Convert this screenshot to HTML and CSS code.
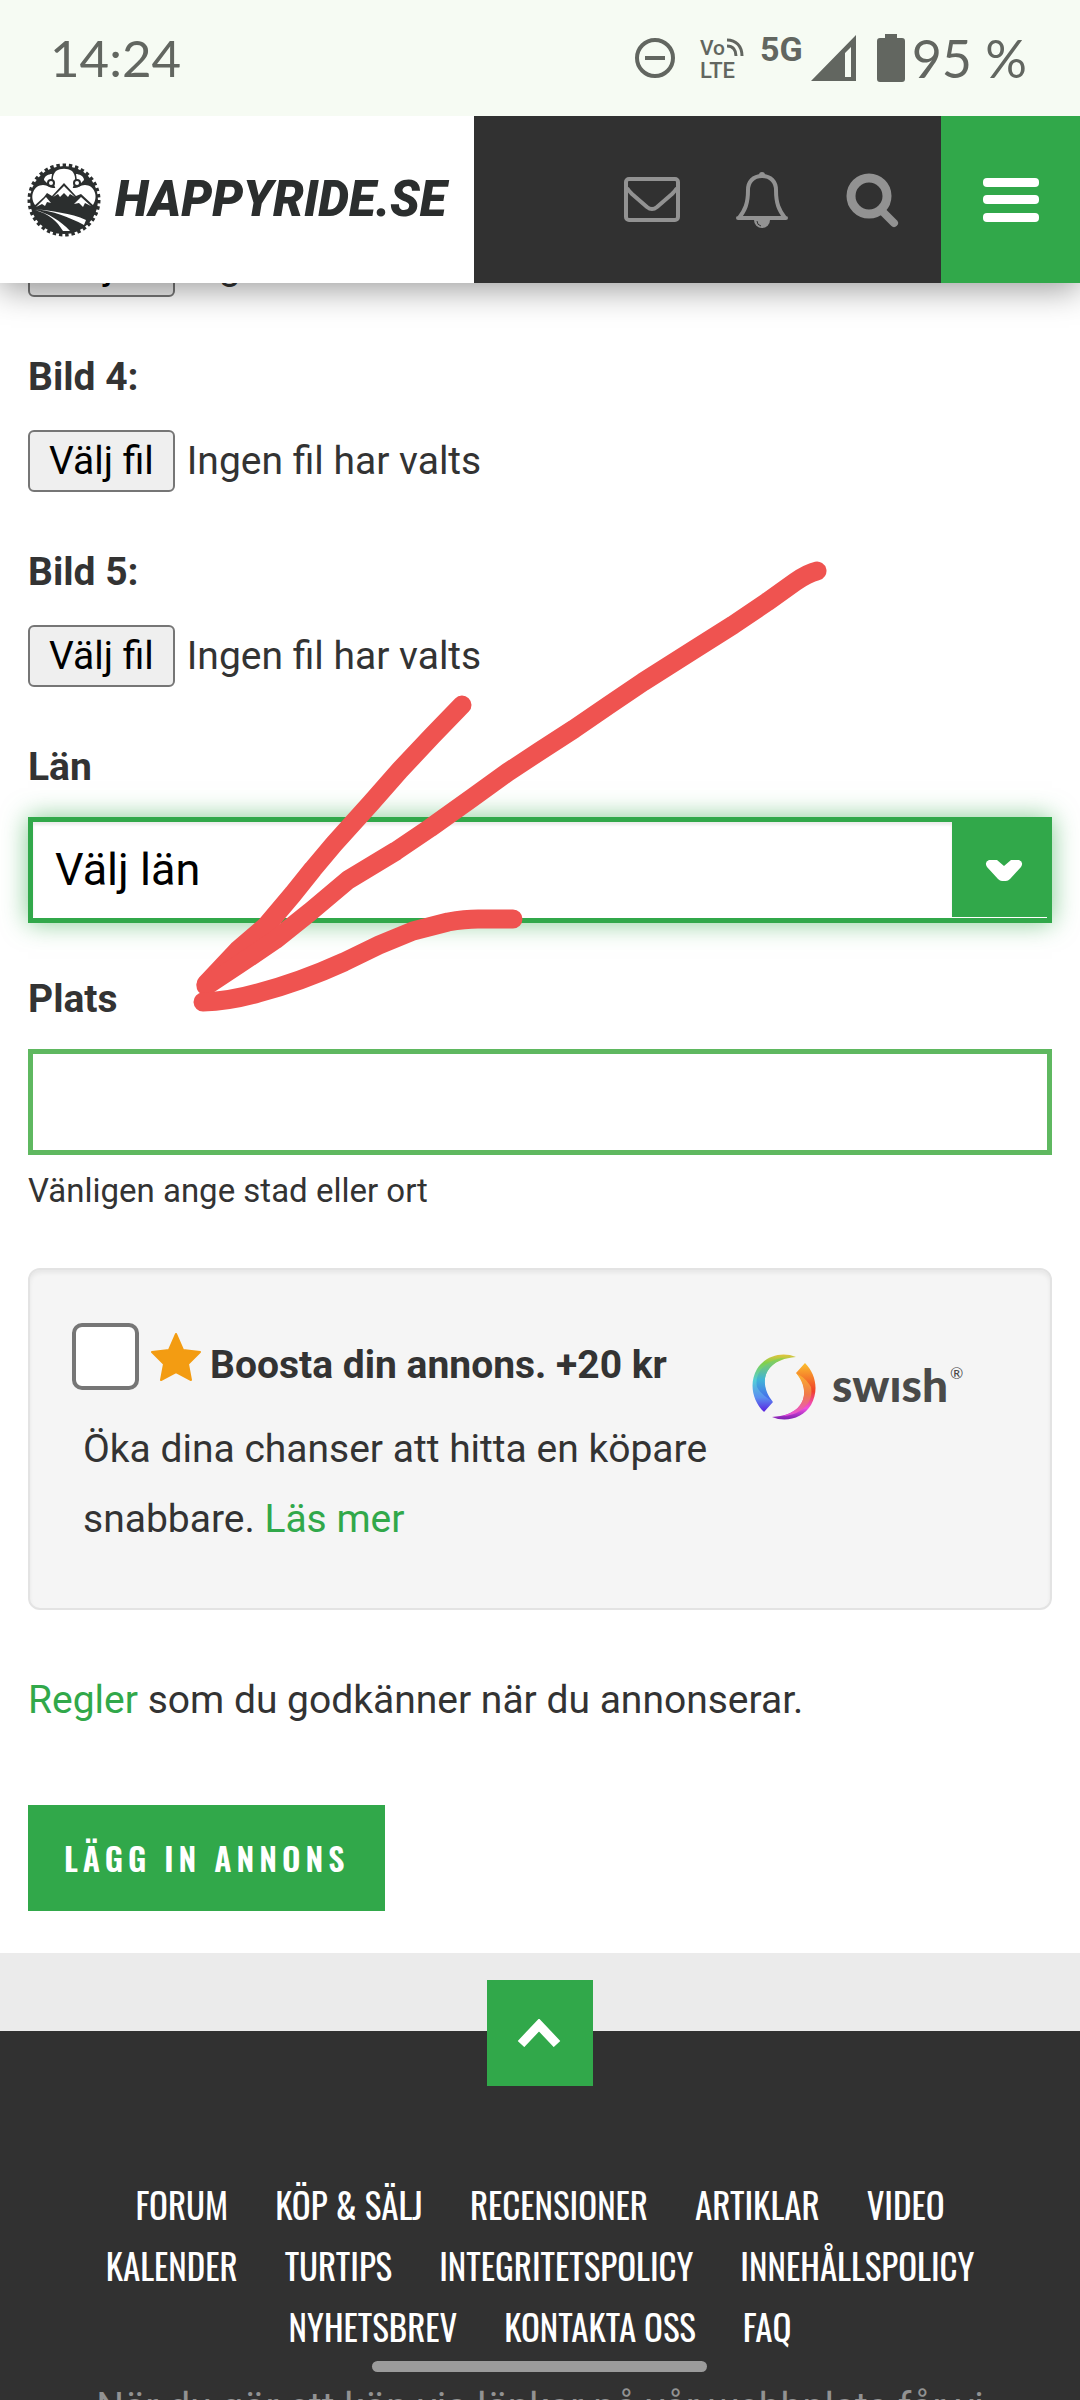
FILE: index.html
```html
<!DOCTYPE html>
<html lang="sv">
<head>
    <meta charset="UTF-8">
    <title>Happyride.se - Lägg in annons</title>
    <meta name="viewport" content="width=device-width, initial-scale=1.0">
    <link rel="stylesheet" href="styles.css">
</head>
<body>
    <div class="screen">
        <div class="statusbar">
            <span class="clock">14:24</span>
            <div class="statusIcons">
                <svg class="dnd" width="42" height="42" viewBox="0 0 42 42"><circle cx="21" cy="21" r="18" fill="none" stroke="#626660" stroke-width="4"/><path d="M11 21h20" stroke="#626660" stroke-width="4"/></svg>
                <svg class="volte" width="46" height="54" viewBox="0 -4 46 54" fill="#626660">
                    <text x="1" y="20" font-size="21">Vo</text>
                    <text x="1" y="43" font-size="22">LTE</text>
                    <path d="M28 11c6 0 9 4 9 10M28 5c9 0 15 6 15 16" fill="none" stroke="#626660" stroke-width="3"/>
                </svg>
                <span class="network">5G</span>
                <svg class="signal" width="46" height="46" viewBox="0 0 46 46"><path d="M45 0v46H0zM34 18v24h6V12z" fill="#626660" fill-rule="evenodd"/></svg>
                <svg class="battery" width="28" height="48" viewBox="0 0 28 48"><path d="M8 0h12v4h5a3 3 0 0 1 3 3v38a3 3 0 0 1-3 3H3a3 3 0 0 1-3-3V7a3 3 0 0 1 3-3h5z" fill="#626660"/></svg>
                <span class="percent">95 %</span>
            </div>
        </div>

        <header class="header">
            <a class="logo" href="#">
                <svg width="74" height="74" viewBox="0 0 74 74">
                    <circle cx="37" cy="37" r="34" fill="#2b2e2e"/>
                    <circle cx="37" cy="37" r="34.5" fill="none" stroke="#2b2e2e" stroke-width="4" stroke-dasharray="3.4 2.79"/>
                    <g fill="#fff">
                        <path d="M28 24c-3-5-3-12 1-16 5-3 11-3 16 0 4 4 4 11 1 16l-1 4H29z"/>
                        <path d="M17 17c0-4 5-6 8-6l-1 7-4 2zM57 17c0-4-5-6-8-6l1 7 4 2z"/>
                        <path d="M8 42C2 33 7 22 16 22c5 0 6 3 10 3h22c4 0 5-3 10-3 9 0 14 11 8 20L37 46z"/>
                    </g>
                    <g fill="#2b2e2e">
                        <circle cx="24" cy="20" r="4"/><circle cx="50" cy="20" r="4"/>
                        <path d="M6 44l11-10 3-4 5 3 12-13 12 13 5-2 13 12-5 7H12z"/>
                    </g>
                    <g fill="#fff">
                        <circle cx="24" cy="20" r="2"/><circle cx="50" cy="20" r="2"/>
                        <path d="M26 34l11-11 11 11-5-3-2 3-4-4-4 4-2-3zM9 44l10-10 5 6-4-1-2 4-3-2zM47 41l7-7 10 9-6-3-2 4-4-4z"/>
                        <path d="M8 46c16 2 36 4 51 11l-2 5C42 54 26 48 8 46zM8 47c13 3 26 11 35 21h-7C30 58 22 51 8 47z"/>
                    </g>
                </svg>
                <span>HAPPYRIDE.SE</span>
            </a>
            <nav class="headerNav">
                <a href="#" aria-label="Meddelanden"><svg width="58" height="58" viewBox="0 0 58 58" fill="none" stroke="#929292" stroke-width="4" stroke-linejoin="round"><rect x="3" y="8" width="52" height="41" rx="3"/><path d="M4 17q2 3 5 6l15 13q5 4 10 0l15-13q3-3 5-6"/></svg></a>
                <a href="#" aria-label="Aviseringar"><svg width="58" height="58" viewBox="0 0 58 58"><path d="M5 47h48M29 5c-9 0-14 6-14 14 0 14-3 20-9 28M29 5c9 0 14 6 14 14 0 14 3 20 9 28" fill="none" stroke="#929292" stroke-width="4" stroke-linecap="round"/><path d="M21 49h16a8 8 0 0 1-16 0z" fill="#929292"/><circle cx="29" cy="4" r="3" fill="#929292"/><path d="M24 50q0 4 4 5" fill="none" stroke="#313131"/></svg></a>
                <a href="#" aria-label="Sök"><svg width="58" height="58" viewBox="0 0 58 58" fill="none" stroke="#929292"><circle cx="26" cy="25" r="18" stroke-width="9"/><path d="M40 41l11 11" stroke-width="8" stroke-linecap="round"/></svg></a>
            </nav>
            <button class="menuButton" type="button" aria-label="Meny"><svg width="56" height="44" viewBox="0 0 56 44" fill="#fff"><rect width="56" height="9" rx="4"/><rect y="17" width="56" height="9" rx="4"/><rect y="35" width="56" height="9" rx="4"/></svg></button>
        </header>

        <form class="adForm">
            <div class="fileField">
                <div class="fileRow">
                    <input id="bild3" type="file" tabindex="-1" aria-label="Bild 3">
                    <button type="button">Välj fil</button>
                    <span>Ingen fil har valts</span>
                </div>
            </div>
            <div class="fileField">
                <label for="bild4">Bild 4:</label>
                <div class="fileRow">
                    <input id="bild4" type="file" tabindex="-1">
                    <button type="button">Välj fil</button>
                    <span>Ingen fil har valts</span>
                </div>
            </div>
            <div class="fileField">
                <label for="bild5">Bild 5:</label>
                <div class="fileRow">
                    <input id="bild5" type="file" tabindex="-1">
                    <button type="button">Välj fil</button>
                    <span>Ingen fil har valts</span>
                </div>
            </div>
            <div class="field">
                <label for="lan">Län</label>
                <div class="selectBox">
                    <select id="lan">
                        <option>Välj län</option>
                    </select>
                    <span class="selectArrow"><svg width="38" height="22" viewBox="0 0 38 22"><path d="M4 1h8l7 6 7-6h8q5 2 2 7L25 20q-2 2-4 2h-4q-2 0-4-2L2 8q-3-5 2-7z" fill="#fff"/></svg></span>
                </div>
            </div>
            <div class="field">
                <label for="plats">Plats</label>
                <input id="plats" class="textInput" type="text">
                <p class="hint">Vänligen ange stad eller ort</p>
            </div>

            <div class="boost">
                <div class="boostText">
                    <div class="boostTitle">
                        <input id="boost" type="checkbox">
                        <svg width="50" height="48" viewBox="0 0 50 48"><path d="M25 1l7 16 17 2-12 12 3 16-15-8-15 8 3-16L1 19l17-2z" fill="#f39c12" stroke="#f39c12" stroke-width="2" stroke-linejoin="round"/></svg>
                        <label for="boost">Boosta din annons. +20 kr</label>
                    </div>
                    <p>Öka dina chanser att hitta en köpare snabbare. <a href="#">Läs mer</a></p>
                </div>
                <svg class="swish" width="214" height="66" viewBox="0 0 214 66" role="img" aria-label="Swish">
                    <defs>
                        <linearGradient id="cool" x1="0" y1="0" x2="0" y2="1"><stop offset="0" stop-color="#e5c43c"/><stop offset=".15" stop-color="#7fd04c"/><stop offset=".45" stop-color="#54cdd8"/><stop offset=".75" stop-color="#5b8ff0"/><stop offset="1" stop-color="#5a1fe0"/></linearGradient>
                        <linearGradient id="cool2" x1="0" y1="0" x2="0" y2="1"><stop offset="0" stop-color="#8cd24a"/><stop offset=".5" stop-color="#3fb3d8"/><stop offset="1" stop-color="#4a5ef0"/></linearGradient>
                        <linearGradient id="warm" x1="0" y1="0" x2="0" y2="1"><stop offset="0" stop-color="#fbc02d"/><stop offset=".5" stop-color="#f0402a"/><stop offset=".8" stop-color="#f04fe0"/><stop offset="1" stop-color="#7a1fb0"/></linearGradient>
                        <linearGradient id="warm2" x1="0" y1="0" x2="0" y2="1"><stop offset="0" stop-color="#fbb42d"/><stop offset=".5" stop-color="#f07a4a"/><stop offset="1" stop-color="#e84fe0"/></linearGradient>
                    </defs>
                    <path d="M44 3C30-3 13 2 5 15-3 29 0 46 12 58l9-10C9 38 5 6 44 3z" fill="url(#cool)"/>
                    <path d="M33 4C14 5 2 19 5 33c4 7 9 10 16 15C9 34 8 12 33 4z" fill="url(#cool2)"/>
                    <path d="M20 63c14 6 31 1 39-12 8-14 5-31-6-42l-9 10c12 10 16 42-24 44z" fill="url(#warm)"/>
                    <path d="M31 62c19-1 31-14 28-29-4-7-8-10-15-14 12 14 13 35-13 43z" fill="url(#warm2)"/>
                    <text class="swishWord" x="80" y="48">swısh</text>
                    <text class="swishReg" x="198" y="25">®</text>
                </svg>
            </div>

            <p class="rules"><a href="#">Regler</a> som du godkänner när du annonserar.</p>
            <button class="submit" type="submit">LÄGG IN ANNONS</button>
        </form>

        <div class="band">
            <a class="toTop" href="#" aria-label="Till toppen"><svg width="44" height="28" viewBox="0 0 44 28"><path d="M4 25L22 6l18 19" fill="none" stroke="#fff" stroke-width="9"/></svg></a>
        </div>

        <footer class="footer">
            <nav class="footerNav">
                <a href="#">FORUM</a>
                <a href="#">KÖP &amp; SÄLJ</a>
                <a href="#">RECENSIONER</a>
                <a href="#">ARTIKLAR</a>
                <a href="#">VIDEO</a>
                <a href="#">KALENDER</a>
                <a href="#">TURTIPS</a>
                <a href="#">INTEGRITETSPOLICY</a>
                <a href="#">INNEHÅLLSPOLICY</a>
                <a href="#">NYHETSBREV</a>
                <a href="#">KONTAKTA OSS</a>
                <a href="#">FAQ</a>
            </nav>
            <p class="disclosure">När du gör ett köp via länkar på vår webbplats får vi</p>
        </footer>

        <!-- hand-drawn arrow on top of the form -->
        <svg class="arrow" width="650" height="470" viewBox="185 555 650 470" fill="none" stroke="#ef5350" stroke-width="19" stroke-linecap="round" stroke-linejoin="round">
            <path d="M462 705L432 736L400 770L371 803L334 844L313 869L293 894L266 926L238 950L206 984"/>
            <path d="M817 571Q808 573 795 582L767 602L733 625L695 649L643 682L609 705L574 729L540 751L508 772L472 798L430 828L396 851L348 880L310 912L275 940L238 965L206 986"/>
            <path d="M203 1002Q230 1001 258 993Q300 982 344 962L379 945L413 931L448 922Q465 919 478 919H513"/>
        </svg>
        <div class="homeBar"></div>
    </div>
</body>
</html>
```
FILE: styles.css
```css
* {
    box-sizing: border-box;
}
body {
    margin: 0;
    font-family: Roboto, "Liberation Sans", sans-serif;
    font-size: 39px;
    line-height: 70px;
    color: #333;
    background-color: #fff;
}
p {
    margin: 0;
}
a {
    color: #31a84a;
    text-decoration: none;
}
svg {
    display: block;
}
button, input, select {
    font: inherit;
    margin: 0;
}
.screen {
    position: relative;
    height: 100vh;
    overflow: hidden;
}

/* status bar */
.statusbar {
    position: relative;
    z-index: 3;
    height: 116px;
    padding: 0 53px 0 50px;
    display: flex;
    justify-content: space-between;
    align-items: center;
    background-color: #f6fbf3;
    color: #626660;
    font-family: Lato, sans-serif;
    font-size: 51px;
}
.statusIcons {
    display: flex;
    align-items: center;
}
.volte {
    margin-left: 23px;
    font-family: Roboto, sans-serif;
    font-weight: 500;
}
.network {
    margin: 0 8px 18px 15px;
    font-family: Roboto, sans-serif;
    font-size: 34px;
    font-weight: 700;
    line-height: 40px;
}
.battery {
    margin: 0 7px 0 20px;
}
.percent {
    font-size: 52px;
}

/* header */
.header {
    position: relative;
    z-index: 2;
    height: 167px;
    display: flex;
    background-color: #313131;
    box-shadow: 0 6px 32px rgba(0, 0, 0, 0.4);
}
.logo {
    display: flex;
    align-items: center;
    gap: 14px;
    padding: 0 28px 0 27px;
    background-color: #fff;
    color: #2b2e2e;
    font-size: 49px;
    font-weight: 900;
    font-style: italic;
}
.headerNav {
    flex: 1;
    display: flex;
    align-items: center;
    justify-content: flex-end;
    gap: 52px;
    padding-right: 40px;
}
.menuButton {
    width: 139px;
    border: 0;
    display: flex;
    align-items: center;
    justify-content: center;
    background-color: #31a84a;
}

/* form, scrolled in under the header */
.adForm {
    margin-top: -66px;
    padding: 0 28px 42px;
}
.adForm label {
    font-weight: 700;
}
.fileField label, .field label {
    display: block;
}
.fileField {
    padding-bottom: 45px;
}
.fileRow {
    position: relative;
    display: flex;
    align-items: center;
    gap: 12px;
    padding-top: 18px;
}
.fileRow input {
    position: absolute;
    width: 148px;
    height: 62px;
    opacity: 0;
}
.fileRow button {
    height: 62px;
    padding: 0 19px;
    border: 2px solid #767676;
    border-radius: 6px;
    background-color: #efefef;
    color: #000;
    line-height: 56px;
}
.fileRow span {
    line-height: 62px;
}
.selectBox {
    display: flex;
    height: 106px;
    margin: 15px 0 41px;
    padding-bottom: 1px;
    border: 5px solid #31a84a;
    background-color: #fff;
    box-shadow: 0 0 24px rgba(49, 168, 74, 0.6);
}
.selectBox select {
    flex: 1;
    padding: 0 22px;
    border: 0;
    appearance: none;
    background-color: #fff;
    color: #000;
    font-size: 45px;
    box-shadow: inset 0 3px 3px rgba(0, 0, 0, 0.08);
}
.selectArrow {
    width: 95px;
    padding-left: 8px;
    display: flex;
    align-items: center;
    justify-content: center;
    background-color: #31a84a;
}
.textInput {
    display: block;
    width: 100%;
    height: 106px;
    margin-top: 15px;
    padding: 0 22px;
    border: 5px solid #5fb860;
    font-size: 45px;
}
.hint {
    margin: 6px 0 47px;
    font-size: 33px;
    line-height: 60px;
}

/* boost box */
.boost {
    display: flex;
    align-items: flex-start;
    justify-content: space-between;
    padding: 53px 84px 54px 42px;
    border: 2px solid #e3e3e3;
    border-radius: 12px;
    background-color: #f5f5f5;
    box-shadow: inset 0 3px 4px rgba(0, 0, 0, 0.06);
}
.boostTitle {
    display: flex;
    align-items: center;
    height: 67px;
    margin-bottom: 24px;
}
.boostTitle input {
    width: 67px;
    height: 67px;
    margin-right: 12px;
    border: 4px solid #767676;
    border-radius: 10px;
    appearance: none;
    background-color: #fff;
}
.boostTitle label {
    padding: 16px 0 0 9px;
}
.boostText p {
    max-width: 660px;
    padding-left: 11px;
}
.swish {
    margin-top: 31px;
    font-family: Lato, sans-serif;
    fill: #4a4a49;
}
.swishWord {
    font-size: 46px;
    font-weight: 900;
}
.swishReg {
    font-size: 16px;
}
.rules {
    margin: 55px 0 70px;
}
.submit {
    height: 106px;
    padding: 0 36px;
    border: 0;
    background-color: #31a84a;
    color: #fff;
    font-family: Oswald, "Liberation Sans", sans-serif;
    font-size: 32px;
    font-weight: 600;
    letter-spacing: 5px;
}

/* footer */
.band {
    height: 78px;
    display: flex;
    justify-content: center;
    background-color: #ebebeb;
}
.toTop {
    position: relative;
    z-index: 1;
    width: 106px;
    height: 106px;
    margin-top: 27px;
    padding-right: 3px;
    display: flex;
    align-items: center;
    justify-content: center;
    background-color: #31a84a;
}
.footer {
    padding: 143px 75px 40px;
    background-color: #313131;
}
.footerNav {
    display: flex;
    flex-wrap: wrap;
    justify-content: center;
    column-gap: 47px;
    font-family: Oswald, "Liberation Sans", sans-serif;
    font-size: 35px;
    line-height: 61px;
}
.footerNav a {
    color: #fff;
}
.disclosure {
    margin-top: 15px;
    color: #929292;
    text-align: center;
    white-space: nowrap;
}

/* overlays */
.arrow {
    position: absolute;
    left: 185px;
    top: 555px;
    z-index: 4;
    pointer-events: none;
}
.homeBar {
    position: absolute;
    left: 50%;
    bottom: 28px;
    width: 335px;
    height: 11px;
    margin-left: -168px;
    border-radius: 6px;
    background-color: #9b9b9b;
}
```
